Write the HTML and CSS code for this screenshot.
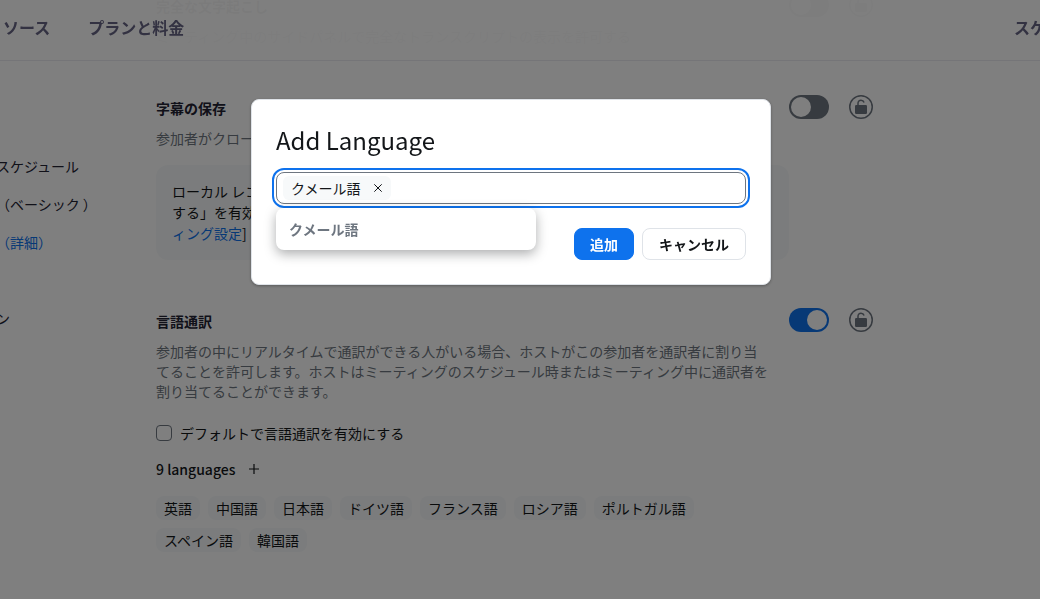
FILE: index.html
```html
<!DOCTYPE html>
<html lang="ja">
<head>
<meta charset="utf-8">
<meta name="viewport" content="width=device-width, initial-scale=1">
<title>ミーティング（詳細）</title>
<link rel="stylesheet" href="styles.css">
</head>
<body>
<svg class="sprite" aria-hidden="true">
  <symbol id="lock" viewBox="0 0 24 24">
    <circle cx="12" cy="12" r="11.25" fill="none" stroke="currentColor" stroke-width="1.5"/>
    <rect x="6" y="10" width="12" height="9" rx="1.2" fill="currentColor"/>
    <path d="M9 10.5V8.2C9 6.4 10.3 5.3 12 5.3s2.7 .9 3.1 2.1" fill="none" stroke="currentColor" stroke-width="1.5"/>
  </symbol>
</svg>

<header class="topbar">
  <nav class="topnav">
    <a href="#">リソース</a>
    <a href="#">プランと料金</a>
  </nav>
  <a class="topbar-action" href="#">スケ</a>
</header>

<div class="layout">
  <nav class="sidebar">
    <a href="#">スケジュール</a>
    <a href="#">（ベーシック ）</a>
    <a class="current" href="#">（詳細）</a>
    <a class="group-start" href="#">ン</a>
  </nav>

  <main class="settings">
    <section class="setting">
      <div class="setting-body">
        <h2>完全な文字起こし</h2>
        <p class="desc">ミーティング中のサイドパネルで完全なトランスクリプトの表示を許可する</p>
      </div>
      <div class="controls">
        <input class="switch" type="checkbox" role="switch" aria-label="完全な文字起こし">
        <button class="lock" type="button" aria-label="ロック"><svg><use href="#lock"/></svg></button>
      </div>
    </section>

    <section class="setting">
      <div class="setting-body">
        <h2>字幕の保存</h2>
        <p class="desc">参加者がクローズド キャプションまたは字幕を保存することを許可する</p>
        <p class="note">ローカル レコーディングに字幕を保存するには、「字幕を埋め込み<br>する」を有効にしてください。[レコーデ<br><a href="#">ィング設定</a>]</p>
      </div>
      <div class="controls">
        <input class="switch" type="checkbox" role="switch" aria-label="字幕の保存">
        <button class="lock" type="button" aria-label="ロック"><svg><use href="#lock"/></svg></button>
      </div>
    </section>

    <section class="setting">
      <div class="setting-body">
        <h2>言語通訳</h2>
        <p class="desc">参加者の中にリアルタイムで通訳ができる人がいる場合、ホストがこの参加者を通訳者に割り当<br>てることを許可します。ホストはミーティングのスケジュール時またはミーティング中に通訳者を割り当てることができます。</p>
        <label class="check"><input type="checkbox">デフォルトで言語通訳を有効にする</label>
        <div class="lang-head">
          <span>9 languages</span>
          <button class="add" type="button" aria-label="言語を追加"><svg viewBox="0 0 10 10"><path d="M5 0v10M0 5h10" stroke="currentColor" stroke-width="1.2"/></svg></button>
        </div>
        <ul class="chips">
          <li>英語</li>
          <li>中国語</li>
          <li>日本語</li>
          <li>ドイツ語</li>
          <li>フランス語</li>
          <li>ロシア語</li>
          <li>ポルトガル語</li>
          <li>スペイン語</li>
          <li>韓国語</li>
        </ul>
      </div>
      <div class="controls">
        <input class="switch" type="checkbox" role="switch" aria-label="言語通訳" checked>
        <button class="lock" type="button" aria-label="ロック"><svg><use href="#lock"/></svg></button>
      </div>
    </section>
  </main>
</div>

<div class="scrim">
  <form class="dialog" role="dialog" aria-labelledby="dialog-title">
    <h1 id="dialog-title">Add Language</h1>
    <div class="combo">
      <div class="combo-field">
        <span class="tag">クメール語
          <button type="button" aria-label="削除"><svg viewBox="0 0 8 8"><path d="M0.3 0.3l7.4 7.4M7.7 0.3L0.3 7.7" stroke="currentColor"/></svg></button>
        </span>
        <input type="text" aria-label="言語">
      </div>
      <ul class="options" role="listbox">
        <li role="option" aria-selected="true">クメール語</li>
      </ul>
    </div>
    <div class="actions">
      <button class="btn primary" type="button">追加</button>
      <button class="btn" type="button">キャンセル</button>
    </div>
  </form>
</div>
</body>
</html>
```

FILE: styles.css
```css
* {
  box-sizing: border-box;
}

body {
  margin: 0;
  height: 100vh;
  overflow: hidden;
  background: #fff;
  color: #131619;
  font: 14px/20px "Noto Sans CJK JP", sans-serif;
}

h1, h2, p, ul {
  margin: 0;
  padding: 0;
}

ul {
  list-style: none;
}

a {
  color: #0e72ed;
  text-decoration: none;
}

button, input {
  margin: 0;
  padding: 0;
  border: 0;
  background: none;
  color: inherit;
  font: inherit;
}

svg {
  display: block;
}

.sprite {
  position: absolute;
  width: 0;
  height: 0;
}

.topbar {
  position: fixed;
  top: 0;
  left: 0;
  right: 0;
  display: flex;
  justify-content: space-between;
  height: 61px;
  padding-top: 15px;
  overflow: hidden;
  background: rgba(255, 255, 255, 0.97);
  border-bottom: 1px solid #ebebf0;
  font-size: 16px;
  line-height: 24px;
  font-weight: 700;
  white-space: nowrap;
}

.topbar a {
  color: #666484;
}

.topnav {
  display: flex;
  gap: 38px;
  margin-left: -13px;
}

.topbar-action {
  width: 26px;
}

.layout {
  display: flex;
  margin-top: -7px;
}

.sidebar {
  flex: none;
  width: 160px;
  margin-left: -4px;
  padding-top: 154px;
}

.sidebar a {
  display: block;
  color: #232333;
  line-height: 38px;
}

.sidebar a.current {
  color: #0e72ed;
}

.sidebar a.group-start {
  margin-top: 38px;
}

.settings {
  flex: 0 1 717px;
}

.setting {
  display: flex;
  padding-bottom: 48px;
}

.setting:first-child {
  padding-bottom: 49px;
}

.setting-body {
  flex: 1;
  min-width: 0;
}

h2 {
  padding-top: 3px;
  color: #232333;
  font-size: 14px;
  line-height: 20px;
  font-weight: 700;
}

.desc {
  margin-top: 10px;
  padding-right: 16px;
  color: #6e7680;
}

.note {
  margin-top: 17px;
  padding: 16px;
  border-radius: 12px;
  background: #f7f9fa;
  line-height: 21px;
}

.controls {
  display: flex;
  flex: none;
  gap: 20px;
}

.switch {
  appearance: none;
  width: 40px;
  height: 24px;
  padding: 2px;
  border-radius: 12px;
  background: #6e7680;
}

.switch::before {
  content: "";
  display: block;
  width: 20px;
  height: 20px;
  border-radius: 50%;
  background: #fff;
}

.switch:checked {
  background: #0e72ed;
}

.switch:checked::before {
  margin-left: 16px;
}

.lock, .lock svg {
  width: 24px;
  height: 24px;
  color: #6e7680;
}

.check {
  display: flex;
  align-items: center;
  gap: 8px;
  margin-top: 22px;
}

.check input {
  appearance: none;
  width: 16px;
  height: 16px;
  border: 1px solid #6e7680;
  border-radius: 4px;
}

.lang-head {
  display: flex;
  align-items: center;
  gap: 14px;
  margin-top: 16px;
  font-weight: 500;
}

.add svg {
  width: 10px;
  height: 10px;
}

.chips {
  display: flex;
  flex-wrap: wrap;
  gap: 8px;
  margin-top: 17px;
  padding-right: 16px;
}

.chips li {
  padding: 0 8px;
  border-radius: 8px;
  background: #f7f9fa;
  line-height: 24px;
}

.scrim {
  position: fixed;
  inset: 0;
  padding: 99px 18px 0 0;
  background: rgba(0, 0, 0, 0.5);
}

.dialog {
  max-width: 520px;
  margin: 0 auto;
  padding: 24px;
  border: 1px solid #dfe3e8;
  border-radius: 8px;
  background: #fff;
  box-shadow: 0 1px 3px rgba(0, 0, 0, 0.3);
}

h1 {
  font-size: 24px;
  line-height: 32px;
  font-weight: 400;
}

.combo {
  position: relative;
  margin-top: 16px;
}

.combo-field {
  display: flex;
  height: 32px;
  padding: 3px 6px;
  border: 1px solid #6e7680;
  border-radius: 8px;
  outline: 2px solid #0e72ed;
  outline-offset: 2px;
}

.tag {
  display: flex;
  flex: none;
  align-items: center;
  gap: 14px;
  padding: 0 9px 0 8px;
  border-radius: 6px;
  background: #f7f9fa;
}

.tag svg {
  width: 8px;
  height: 8px;
}

.combo-field input {
  flex: 1;
  min-width: 0;
  outline: 0;
}

.options {
  position: absolute;
  top: 36px;
  left: 0;
  width: 260px;
  border-radius: 8px;
  background: #fff;
  box-shadow: 0 4px 12px rgba(19, 22, 25, 0.35);
}

.options li {
  padding: 0 13px;
  color: #6e7680;
  font-weight: 700;
  line-height: 42px;
}

.actions {
  display: flex;
  justify-content: flex-end;
  gap: 8px;
  margin-top: 24px;
}

.btn {
  height: 32px;
  padding: 0 16px;
  border: 1px solid #dfe3e8;
  border-radius: 8px;
  font-weight: 700;
}

.btn.primary {
  padding: 0 15px;
  border-color: #0e72ed;
  background: #0e72ed;
  color: #fff;
}
```
